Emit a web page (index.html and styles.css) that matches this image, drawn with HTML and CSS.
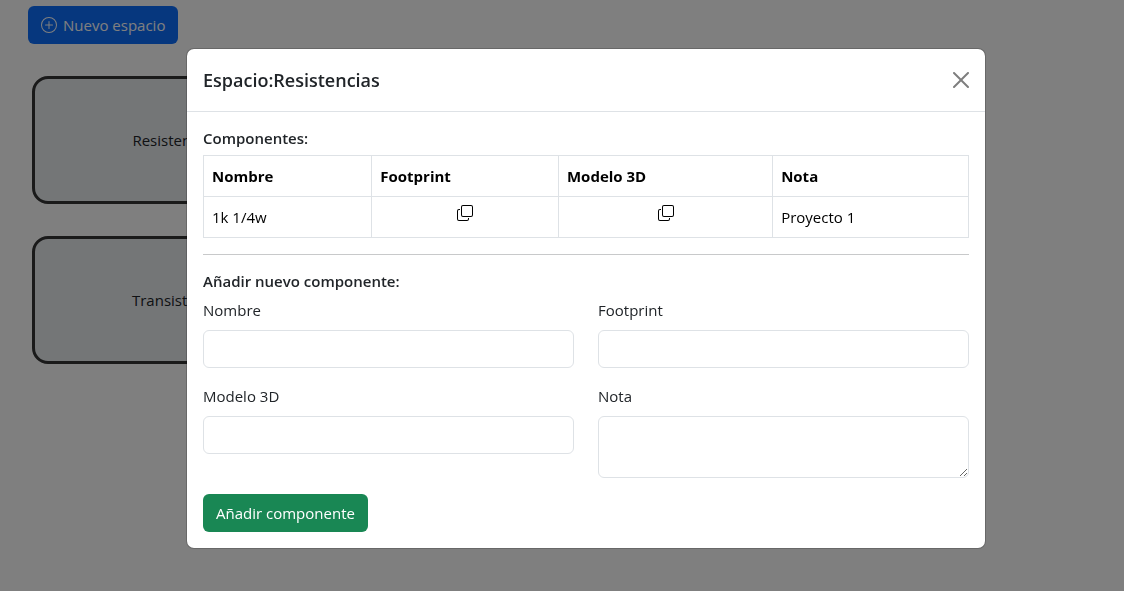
FILE: index.html
```html
<!DOCTYPE html>
<html lang="es">
<head>
<meta charset="utf-8">
<meta name="viewport" content="width=device-width, initial-scale=1">
<title>Espacios</title>
<link rel="stylesheet" href="styles.css">
</head>
<body>
<main class="page">
  <button type="button" class="btn btn-primary">
    <svg class="icon" viewBox="0 0 16 16" aria-hidden="true"><path d="M8 15A7 7 0 1 1 8 1a7 7 0 0 1 0 14m0 1A8 8 0 1 0 8 0a8 8 0 0 0 0 16"/><path d="M8 4a.5.5 0 0 1 .5.5v3h3a.5.5 0 0 1 0 1h-3v3a.5.5 0 0 1-1 0v-3h-3a.5.5 0 0 1 0-1h3v-3A.5.5 0 0 1 8 4"/></svg>
    Nuevo espacio
  </button>
  <div class="spaces">
    <div class="space">Resistencias</div>
    <div class="space">Transistores</div>
  </div>
</main>

<div class="backdrop">
  <div class="modal" role="dialog" aria-modal="true" aria-labelledby="modal-title">
    <header class="modal-header">
      <h1 class="modal-title" id="modal-title">Espacio:Resistencias</h1>
      <button type="button" class="close" aria-label="Cerrar">
        <svg class="icon" viewBox="0 0 16 16" aria-hidden="true"><path d="M.293.293a1 1 0 0 1 1.414 0L8 6.586 14.293.293a1 1 0 1 1 1.414 1.414L9.414 8l6.293 6.293a1 1 0 0 1-1.414 1.414L8 9.414l-6.293 6.293a1 1 0 0 1-1.414-1.414L6.586 8 .293 1.707a1 1 0 0 1 0-1.414"/></svg>
      </button>
    </header>
    <div class="modal-body">
      <h2 class="section-title">Componentes:</h2>
      <table class="table">
        <colgroup><col class="col-name"><col class="col-footprint"><col class="col-model"><col></colgroup>
        <thead>
          <tr><th scope="col">Nombre</th><th scope="col">Footprint</th><th scope="col">Modelo 3D</th><th scope="col">Nota</th></tr>
        </thead>
        <tbody>
          <tr>
            <td>1k 1/4w</td>
            <td><button type="button" class="copy" aria-label="Copiar footprint"><svg class="icon" viewBox="0 0 16 16" aria-hidden="true"><path fill-rule="evenodd" d="M4 2a2 2 0 0 1 2-2h8a2 2 0 0 1 2 2v8a2 2 0 0 1-2 2H6a2 2 0 0 1-2-2zm2-1a1 1 0 0 0-1 1v8a1 1 0 0 0 1 1h8a1 1 0 0 0 1-1V2a1 1 0 0 0-1-1zM2 5a1 1 0 0 0-1 1v8a1 1 0 0 0 1 1h8a1 1 0 0 0 1-1v-1h1v1a2 2 0 0 1-2 2H2a2 2 0 0 1-2-2V6a2 2 0 0 1 2-2h1v1z"/></svg></button></td>
            <td><button type="button" class="copy" aria-label="Copiar modelo 3D"><svg class="icon" viewBox="0 0 16 16" aria-hidden="true"><path fill-rule="evenodd" d="M4 2a2 2 0 0 1 2-2h8a2 2 0 0 1 2 2v8a2 2 0 0 1-2 2H6a2 2 0 0 1-2-2zm2-1a1 1 0 0 0-1 1v8a1 1 0 0 0 1 1h8a1 1 0 0 0 1-1V2a1 1 0 0 0-1-1zM2 5a1 1 0 0 0-1 1v8a1 1 0 0 0 1 1h8a1 1 0 0 0 1-1v-1h1v1a2 2 0 0 1-2 2H2a2 2 0 0 1-2-2V6a2 2 0 0 1 2-2h1v1z"/></svg></button></td>
            <td>Proyecto 1</td>
          </tr>
        </tbody>
      </table>
      <hr class="divider">
      <h2 class="section-title">Añadir nuevo componente:</h2>
      <form>
        <div class="fields">
          <div class="field"><label for="nombre">Nombre</label><input class="control" type="text" id="nombre"></div>
          <div class="field"><label for="footprint">Footprint</label><input class="control" type="text" id="footprint"></div>
          <div class="field"><label for="modelo">Modelo 3D</label><input class="control" type="text" id="modelo"></div>
          <div class="field"><label for="nota">Nota</label><textarea class="control" id="nota" rows="2"></textarea></div>
        </div>
        <button type="submit" class="btn btn-success">Añadir componente</button>
      </form>
    </div>
  </div>
</div>
</body>
</html>
```
FILE: styles.css
```css
*, *::before, *::after { box-sizing: border-box; }

body {
  margin: 0;
  font: 400 15px/24px "Open Sans", "Noto Sans", sans-serif;
  color: #212529;
  background: #fff;
}

button, input, textarea { font: inherit; margin: 0; }
h1, h2 { margin: 0; font-weight: 600; }

.icon { width: 16px; height: 16px; fill: currentColor; flex: none; }

.page { padding: 6px 28px; }

.btn {
  display: inline-flex;
  align-items: center;
  gap: 6px;
  padding: 6px 12px;
  border: 1px solid transparent;
  border-radius: 6px;
  color: #fff;
  cursor: pointer;
}
.btn-primary { background: #0d6efd; }
.btn-success { background: #198754; }

.spaces {
  display: grid;
  gap: 32px;
  width: 286px;
  margin: 32px 4px;
}
.space {
  display: flex;
  align-items: center;
  justify-content: center;
  min-height: 128px;
  border: 3px solid #343434;
  border-radius: 16px;
  background: #e9ecef;
}

.backdrop {
  position: fixed;
  inset: 0;
  overflow: auto;
  padding: 48px 138px 42px 186px;
  background: rgba(0, 0, 0, .5);
}
.modal {
  border: 1px solid rgba(0, 0, 0, .18);
  border-radius: 8px;
  background: #fff;
  background-clip: padding-box;
}
.modal-header {
  display: flex;
  align-items: center;
  justify-content: space-between;
  padding: 16px;
  border-bottom: 1px solid #dee2e6;
}
.modal-title { font-size: 18px; line-height: 30px; }
.close {
  display: flex;
  padding: 8px;
  margin: -8px;
  border: 0;
  background: none;
  color: #000;
  opacity: .5;
  cursor: pointer;
}
.modal-body { padding: 16px; }
.section-title { margin-bottom: 6px; font-size: 15px; line-height: 21px; }

.table {
  width: 100%;
  table-layout: fixed;
  border-collapse: collapse;
  color: #000;
}
.table th, .table td {
  padding: 8px;
  border: 1px solid #dee2e6;
  text-align: left;
  vertical-align: top;
}
.table th { font-weight: 700; }
.col-name { width: 22%; }
.col-footprint { width: 24.4%; }
.col-model { width: 28%; }
.copy {
  display: flex;
  margin: 0 auto;
  padding: 0;
  border: 0;
  background: none;
  color: #000;
  cursor: pointer;
}

.divider { margin: 16px 0; border: 0; border-top: 1px solid #c8c9ca; }

.fields {
  display: grid;
  grid-template-columns: 1fr 1fr;
  gap: 16px 24px;
  align-items: start;
  margin-bottom: 16px;
}
.field { display: grid; gap: 8px; }
.control {
  display: block;
  width: 100%;
  padding: 6px 12px;
  border: 1px solid #dee2e6;
  border-radius: 6px;
  background: #fff;
  color: #212529;
}
textarea.control { resize: vertical; }
```
